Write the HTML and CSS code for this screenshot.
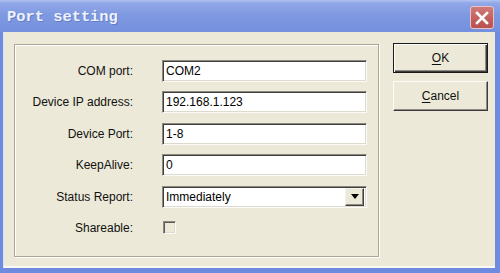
FILE: index.html
```html
<!DOCTYPE html>
<html>
<head>
<meta charset="utf-8">
<link rel="stylesheet" href="styles.css">
</head>
<body>
<div class="window">
  <div class="titlebar">
    <span class="title">Port setting</span>
    <span class="close">
      <svg width="14" height="14" viewBox="0 0 14 14"><path d="M2 2 L12 12 M12 2 L2 12" stroke="#fff" stroke-width="2.6" stroke-linecap="square"/></svg>
    </span>
  </div>
  <div class="body">
    <div class="group">
      <div class="form">
        <span class="lbl">COM port:</span><div class="field">COM2</div>
        <span class="lbl">Device IP address:</span><div class="field">192.168.1.123</div>
        <span class="lbl">Device Port:</span><div class="field">1-8</div>
        <span class="lbl">KeepAlive:</span><div class="field">0</div>
        <span class="lbl">Status Report:</span>
        <div class="field select"><span>Immediately</span><span class="dd"><svg width="8" height="5" viewBox="0 0 8 5"><path d="M0 0 H8 L4 5 Z" fill="#000"/></svg></span></div>
        <span class="lbl">Shareable:</span><div class="chkcell"><span class="chk"></span></div>
      </div>
    </div>
    <div class="buttons">
      <div class="btn default"><span><u>O</u>K</span></div>
      <div class="btn"><span><u>C</u>ancel</span></div>
    </div>
  </div>
</div>
</body>
</html>
```
FILE: styles.css
```css
html, body {
  margin: 0;
  padding: 0;
  background: #ece9d8;
}
.window {
  width: 500px;
  height: 273px;
  display: flex;
  flex-direction: column;
  font-family: "Liberation Sans", Arial, sans-serif;
  font-size: 12px;
  color: #000;
}
.titlebar {
  height: 32px;
  flex: none;
  display: flex;
  align-items: flex-start;
  background: linear-gradient(#b3c2f0 0, #91a8e8 3px, #7f99e1 45%, #7590dd 100%);
}
.title {
  margin-left: 7px;
  margin-top: 8px;
  font-family: "Liberation Mono", "Courier New", monospace;
  font-weight: bold;
  font-size: 15.4px;
  line-height: 18px;
  color: #eef2fb;
  text-shadow: 1px 1px 0 rgba(70, 90, 170, 0.45);
}
.close {
  margin-left: auto;
  margin-right: 6px;
  margin-top: 6px;
  width: 24px;
  height: 23px;
  box-sizing: border-box;
  border: 1px solid #e6c4c4;
  border-radius: 3px;
  background: linear-gradient(#d07a78, #c45e5c 60%, #b85252);
  display: flex;
  align-items: center;
  justify-content: center;
}
.body {
  flex: 1;
  display: flex;
  align-items: flex-start;
  border-left: 3px solid #6f8be0;
  border-right: 5px solid #6f8be0;
  border-bottom: 5px solid #6f8be0;
  box-shadow: inset 1px 0 0 #dfe3f4, inset 0 -1px 0 #f7f7f0, inset 0 -2px 0 #fbfbf6;
  background: #ece9d8;
}
.group {
  margin-left: 11px;
  margin-top: 12px;
  width: 365px;
  height: 213px;
  box-sizing: border-box;
  border: 1px solid #a9a694;
  box-shadow: inset 1px 1px 0 #fff, 1px 1px 0 #fff;
}
.form {
  display: grid;
  grid-template-columns: 118px 205px;
  column-gap: 29px;
  grid-auto-rows: 22px;
  row-gap: 9.4px;
  padding-top: 15px;
}
.lbl {
  justify-self: end;
  align-self: center;
  white-space: nowrap;
  color: #111;
}
.field {
  box-sizing: border-box;
  height: 22px;
  background: #fff;
  border: 1px solid;
  border-color: #8c8a80 #fbfbfb #fbfbfb #8c8a80;
  box-shadow: inset 1px 1px 0 #3e3e3e, inset -1px -1px 0 #dedbcc;
  padding-left: 3px;
  line-height: 20px;
  display: flex;
  align-items: center;
}
.select {
  padding-right: 2px;
}
.dd {
  margin-left: auto;
  width: 19px;
  height: 18px;
  box-sizing: border-box;
  background: #ece9d8;
  border: 1px solid;
  border-color: #f4f3ec #3f3f3f #3f3f3f #f4f3ec;
  box-shadow: inset -1px -1px 0 #8d8b82;
  display: flex;
  align-items: center;
  justify-content: center;
}
.chkcell {
  display: flex;
  align-items: center;
  padding-left: 1px;
}
.chk {
  width: 13px;
  height: 13px;
  box-sizing: border-box;
  background: #ece9d8;
  border: 1px solid;
  border-color: #8c8a80 #fbfbfb #fbfbfb #8c8a80;
  box-shadow: inset 1px 1px 0 #5a5a5a, inset -1px -1px 0 #dedbcc;
}
.buttons {
  margin-left: 14px;
  margin-top: 11px;
  display: flex;
  flex-direction: column;
  gap: 8px;
}
.btn {
  width: 95px;
  height: 30px;
  box-sizing: border-box;
  background: #ece9d8;
  border: 1px solid;
  border-color: #fdfdfb #3c3c3c #3c3c3c #fdfdfb;
  box-shadow: inset -1px -1px 0 #8d8b82;
  display: flex;
  align-items: center;
  justify-content: center;
  color: #111;
}
.btn.default {
  border: 1px solid #1a1a1a;
  box-shadow: inset 1px 1px 0 #fdfdfb, inset -1px -1px 0 #3c3c3c, inset -2px -2px 0 #8d8b82;
}
.btn u {
  text-decoration: underline;
  text-underline-offset: 2px;
}
```
